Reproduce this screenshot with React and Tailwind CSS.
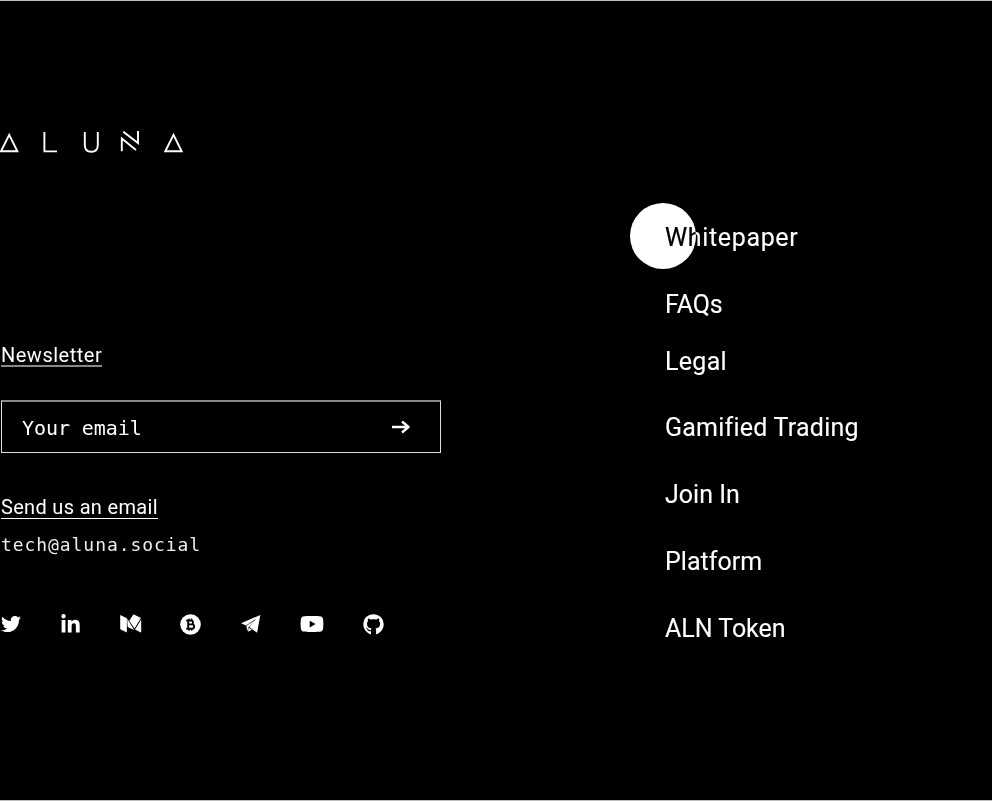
import React from "react";
import { FaTwitter, FaLinkedinIn, FaGithub, FaYoutube } from "react-icons/fa";

const links = [
  { label: "Whitepaper", cls: "h-[67px] tracking-[0.65px]" },
  { label: "FAQs", cls: "h-[67px] tracking-[-0.1px]" },
  { label: "Legal", cls: "h-[47px] tracking-[0.3px]" },
  { label: "Gamified Trading", cls: "mt-[9px] h-[67px] tracking-[0.23px]" },
  { label: "Join In", cls: "h-[67px] tracking-[0px]" },
  { label: "Platform", cls: "h-[67px] tracking-[0.02px]" },
  { label: "ALN Token", cls: "h-[67px] tracking-[-0.03px]" },
];

function Logo() {
  return (
    <svg className="mt-[128px] block h-[26px] w-[186px]" viewBox="0 0 186 26" fill="none" stroke="white" strokeWidth="1.9">
      <path d="M1 22.2 9.2 5.9 17.4 22.2Z" />
      <path d="M44.4 3V22.4H57" />
      <path d="M84.8 3V16C84.8 20.5 87.5 22.7 91.3 22.7S97.8 20.5 97.8 16V3" />
      <path d="M121.8 22.3V9.6L136 21M123.3 2.8 138 14V2" />
      <path d="M165.3 22.2 173.5 5.9 181.7 22.2Z" />
    </svg>
  );
}

function Medium() {
  return (
    <svg className="ml-[39px] h-[20px] w-[22px]" viewBox="0 0 22 20" fill="white">
      <path d="M0.2 1 6.9 4.3V18.5L0.8 15.5Q0.2 15.2 0.2 14.4Z" />
      <path d="M7.2 4.6 14.1 15.9 7.7 13.1Z" />
      <path d="M13 0.9Q13.4 0.3 14 0.6L20.9 4.1 14.5 14.4 9.3 6.7Z" />
      <path d="M21.2 5.6V17.7Q21.2 18.7 20.3 18.3L15 15.6Z" />
    </svg>
  );
}

function Bitcoin() {
  return (
    <svg className="ml-[38px] h-[21px] w-[21px]" viewBox="0 0 21 21">
      <circle cx="10.5" cy="10.5" r="10.3" fill="white" />
      <g fill="none" stroke="black" strokeWidth="1.9">
        <path d="M6.3 6.5H11.5A2 2 0 0 1 11.5 10.4H8.3M11.5 10.4H12A2.1 2.1 0 0 1 12 14.7H6.3M8.2 6.5V14.7" />
        <path strokeWidth="1.3" d="M9.1 4.5V6.5M11.7 4.5V6.5M9.1 14.5V16.7M11.7 14.5V16.7" />
      </g>
    </svg>
  );
}

function Telegram() {
  return (
    <svg className="ml-[40px] h-[18px] w-[20px]" viewBox="0 0 20 18" fill="white">
      <path d="M19.3 0 0 8.2 5 10.4 15.2 3.6 8.2 12 16.1 17.7Z" />
      <path d="M5.2 10.9 14 5 7.3 12.4 6.8 16.2Z" />
      <path d="M6.9 16.8 7.7 12.7 10.9 14.7Z" />
    </svg>
  );
}

export default function App() {
  return (
    <main className="relative flex h-[801px] w-[992px] overflow-hidden border-y border-[#bdbdbd] bg-black text-white [font-family:Roboto,sans-serif]">
      <section className="w-[665px]">
        <Logo />
        <div className="ml-[1px] mt-[188px] h-[24px] w-[101px] whitespace-nowrap border-b-2 border-[#888] text-[20px] leading-[24px] tracking-[0.5px]">
          Newsletter
        </div>
        <form className="ml-[1px] mt-[33px] flex h-[53px] w-[440px] items-center justify-between border border-t-2 border-[#ddd] border-t-[#888] pl-5 pr-[30px]">
          <span className="whitespace-nowrap pt-px text-[20px] tracking-[-0.08px] [font-family:'DejaVu_Sans_Mono',monospace]">Your email</span>
          <svg className="h-[14px] w-[18px]" viewBox="0 0 18 14" fill="none" stroke="white" strokeWidth="2.3">
            <path d="M0 7H16.5M10 1.5 16.5 7 10 12.5" strokeLinejoin="round" />
          </svg>
        </form>
        <div className="ml-[1px] mt-[42px] h-[24px] w-[157px] whitespace-nowrap border-b border-white text-[20px] leading-[25px] tracking-[0.32px]">
          Send us an email
        </div>
        <div className="ml-[1px] mt-[14px] h-[24px] whitespace-nowrap text-[18px] leading-[24px] tracking-[0.93px] text-[#eee] [font-family:'DejaVu_Sans_Mono',monospace]">
          tech@aluna.social
        </div>
        <div className="mt-[55px] flex h-[24px] items-center">
          <FaTwitter className="ml-[1px] h-[20px] w-[20px]" />
          <FaLinkedinIn className="ml-[39px] h-[21px] w-[21px]" />
          <Medium />
          <Bitcoin />
          <Telegram />
          <FaYoutube className="ml-[39px] h-[24px] w-[24px]" />
          <FaGithub className="ml-[39px] h-[21px] w-[21px]" />
        </div>
      </section>
      <nav className="flex flex-col pt-[203px] text-[25px] [-webkit-text-stroke:0.1px_white]">
        {links.map((link) => (
          <a key={link.label} className={`flex items-center whitespace-nowrap ${link.cls}`}>
            {link.label}
          </a>
        ))}
      </nav>
      <div className="absolute left-[630px] top-[202px] h-[66px] w-[66px] rounded-full bg-white mix-blend-difference" />
    </main>
  );
}
